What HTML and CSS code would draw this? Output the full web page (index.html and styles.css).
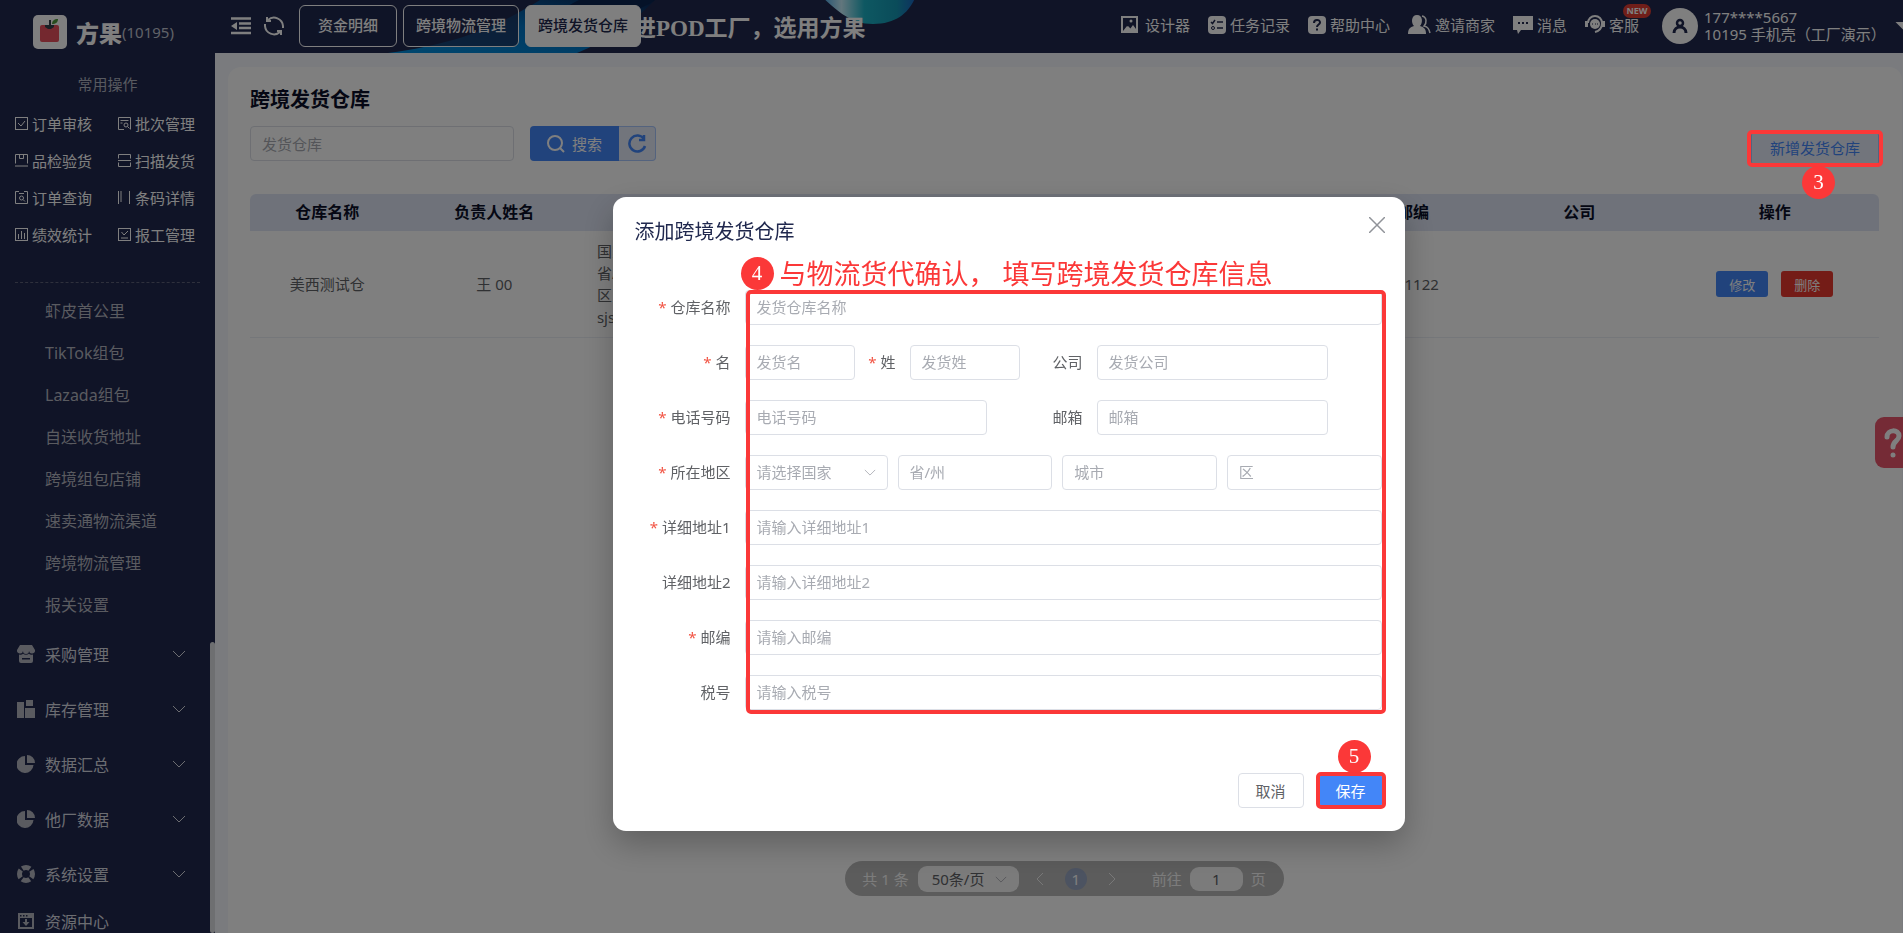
FILE: index.html
```html
<!DOCTYPE html>
<html lang="zh-CN">
<head>
    <meta charset="UTF-8">
    <meta name="viewport" content="width=device-width, initial-scale=1.0">
    <title>跨境发货仓库</title>
    <link rel="stylesheet" href="styles.css">
</head>
<body>
    <div class="app">
        <aside class="sidebar">
            <div class="brand">
                <svg class="brand-logo" viewBox="0 0 34 34">
                    <rect width="34" height="34" rx="5" fill="#fff"/>
                    <rect x="7" y="10" width="19" height="17" rx="2" fill="#e8505f"/>
                    <path d="M12 10h9v2l-3 2h-3l-3-2z" fill="#33404a"/>
                    <path d="M16 5h2v8h-2z" fill="#33404a"/>
                    <path d="M19 9c0-3 2-5 6-5 0 3-2 5-6 5z" fill="#4f9a3c"/>
                </svg>
                <span class="brand-name">方果</span>
                <span class="brand-id">(10195)</span>
            </div>
            <div class="quick-title">常用操作</div>
            <nav class="quick">
                <a href="#"><svg viewBox="0 0 13 13"><rect x=".5" y=".5" width="12" height="12"/><path d="M3 6l3 3 4-5"/></svg>订单审核</a>
                <a href="#"><svg viewBox="0 0 13 13"><path d="M6 12.500H.5V.5h12v12M2.500 3.500h8M2.500 6h2"/><circle cx="8" cy="8" r="2"/><path d="M9.500 9.500l2 2"/></svg>批次管理</a>
                <a href="#"><svg viewBox="0 0 13 13"><path d="M.5 9.500V.5h12v9M4.500.5v4h4v-4M0 12h13"/></svg>品检验货</a>
                <a href="#"><svg viewBox="0 0 13 13"><path d="M.5 4.500v-4h12v4M.5 8.500v4h12v-4M0 6.500h13"/></svg>扫描发货</a>
                <a href="#"><svg viewBox="0 0 13 13"><path d="M4 .5H.5v12h12V.5H9M4 2.500h5"/><circle cx="6.500" cy="7" r="2"/><path d="M8 8.500l2 2"/></svg>订单查询</a>
                <a href="#"><svg viewBox="0 0 13 13"><path d="M.5 0v13M3 0v11M11.500 0v13"/></svg>条码详情</a>
                <a href="#"><svg viewBox="0 0 13 13"><rect x=".5" y=".5" width="12" height="12"/><path d="M3.500 6v5M6.500 3v8M9.500 5v6"/></svg>绩效统计</a>
                <a href="#"><svg viewBox="0 0 13 13"><rect x=".5" y=".5" width="12" height="12"/><path d="M3.500 4l2.500 3 4-4M3 10h7"/></svg>报工管理</a>
            </nav>
            <nav class="submenu">
                <a href="#">虾皮首公里</a>
                <a href="#">TikTok组包</a>
                <a href="#">Lazada组包</a>
                <a href="#">自送收货地址</a>
                <a href="#">跨境组包店铺</a>
                <a href="#">速卖通物流渠道</a>
                <a href="#">跨境物流管理</a>
                <a href="#">报关设置</a>
            </nav>
            <nav class="menu">
                <a href="#">
                    <svg class="menu-icon" viewBox="0 0 18 18"><path d="M3 0h12l3 5a3 3 0 0 1-6 1 3 3 0 0 1-6 0 3 3 0 0 1-6-1z"/><path fill-rule="evenodd" d="M2 9.500c2 .6 3 .3 4-.7 1.700 1.300 4.300 1.300 6 0 1 1 2 1.300 4 .7V16a2 2 0 0 1-2 2H4a2 2 0 0 1-2-2zM5 13v1.500h8V13z"/></svg>
                    采购管理
                    <svg class="arrow" viewBox="0 0 14 8"><path d="M1 1l6 6 6-6"/></svg>
                </a>
                <a href="#">
                    <svg class="menu-icon" viewBox="0 0 18 18"><path d="M0 2h7v16H0zM9 0h7v6H9zM8 8h10v10H8z"/></svg>
                    库存管理
                    <svg class="arrow" viewBox="0 0 14 8"><path d="M1 1l6 6 6-6"/></svg>
                </a>
                <a href="#">
                    <svg class="menu-icon" viewBox="0 0 18 18"><path d="M8 1a8.500 8.500 0 1 0 8.500 9H8zM10 0v8h8a8 8 0 0 0-8-8z"/></svg>
                    数据汇总
                    <svg class="arrow" viewBox="0 0 14 8"><path d="M1 1l6 6 6-6"/></svg>
                </a>
                <a href="#">
                    <svg class="menu-icon" viewBox="0 0 18 18"><path d="M8 1a8.500 8.500 0 1 0 8.500 9H8zM10 0v8h8a8 8 0 0 0-8-8z"/></svg>
                    他厂数据
                    <svg class="arrow" viewBox="0 0 14 8"><path d="M1 1l6 6 6-6"/></svg>
                </a>
                <a href="#">
                    <svg class="menu-icon ring" viewBox="0 0 18 18"><circle cx="9" cy="9" r="6.500"/></svg>
                    系统设置
                    <svg class="arrow" viewBox="0 0 14 8"><path d="M1 1l6 6 6-6"/></svg>
                </a>
                <a href="#" class="last">
                    <svg class="menu-icon" viewBox="0 0 18 18"><path fill-rule="evenodd" d="M1 1h16v16H1zM3 6v9h12V6zM3 3v1.500h1.500V3zM6 3v1.500h1.500V3zM9 3v1.500h1.500V3z"/><path d="M8 7h2v3h2.500L9 14l-3.500-4H8z"/></svg>
                    资源中心
                </a>
            </nav>
            <div class="sidebar-thumb"></div>
        </aside>

        <div class="page">
            <header class="topbar">
                <svg class="banner" viewBox="0 0 700 53">
                    <defs>
                        <linearGradient id="wave" x1="0" y1="1" x2="1" y2="0">
                            <stop offset="0" stop-color="#0090e0"/>
                            <stop offset=".5" stop-color="#0074c4"/>
                            <stop offset="1" stop-color="#0c2350"/>
                        </linearGradient>
                        <linearGradient id="ball" x1="0" y1="0" x2="1" y2="0">
                            <stop offset="0" stop-color="#4aa8e8"/>
                            <stop offset=".2" stop-color="#c5edfa"/>
                            <stop offset=".45" stop-color="#1cb0c4"/>
                            <stop offset=".8" stop-color="#1598b4"/>
                            <stop offset="1" stop-color="#1a64c0"/>
                        </linearGradient>
                    </defs>
                    <path d="M173 53C240 44 280 28 325 0H440C420 20 395 40 362 53z" fill="url(#wave)"/>
                    <path d="M330 18C350 8 356 4 364 0H440C420 14 390 22 330 18z" fill="#0a2450"/>
                    <path d="M608-2C620 8 634 24 658 24 682 24 694 12 700-2z" fill="url(#ball)"/>
                </svg>
                <button class="icon-btn" type="button" aria-label="收起菜单">
                    <svg width="20" height="18" viewBox="0 0 20 18"><path d="M0 1.500h20M8 6.500h12M8 11h12M0 16h20" stroke="#fff" stroke-width="2.500"/><path d="M0 9l6-4v8z" fill="#fff"/></svg>
                </button>
                <button class="icon-btn" type="button" aria-label="刷新">
                    <svg width="22" height="22" viewBox="0 0 22 22" fill="none" stroke="#fff" stroke-width="2"><path d="M5 5a9 9 0 0 1 15 6v2M17 17a9 9 0 0 1-15-6V9"/><path d="M4 2v4h4M18 20v-4h-4"/></svg>
                </button>
                <div class="tabs">
                    <button class="tab" type="button">资金明细</button>
                    <button class="tab" type="button">跨境物流管理</button>
                    <button class="tab active" type="button">跨境发货仓库</button>
                </div>
                <div class="slogan">进POD工厂，选用方果</div>
                <nav class="tools">
                    <a href="#" class="wide"><svg width="17" height="17" viewBox="0 0 17 17"><path fill-rule="evenodd" d="M0 0h17v17H0zM2 2v13l4-5 3 3 3-4 3 4V2z" fill="#fff"/><path d="M3 15l4-5 3 3 2-2 3 4z" fill="#fff"/><circle cx="10" cy="5" r="1.500" fill="#fff"/></svg>设计器</a>
                    <a href="#"><svg width="18" height="18" viewBox="0 0 18 18"><rect width="18" height="18" rx="4" fill="#fff"/><path d="M3 6l1.500 1.500L7 4M9 6h6M9 12h6" stroke="#20284e" stroke-width="1.500" fill="none"/><circle cx="5" cy="12" r="1.500" stroke="#20284e" fill="none"/></svg>任务记录</a>
                    <a href="#"><svg width="18" height="18" viewBox="0 0 18 18"><rect width="18" height="18" rx="4" fill="#fff"/><path d="M6 7c0-4 6-4 6-.5 0 2-3 2-3 4.500" stroke="#20284e" stroke-width="2" fill="none"/><path d="M8 12.500h2v2H8z" fill="#20284e"/></svg>帮助中心</a>
                    <a href="#"><svg width="23" height="19" viewBox="0 0 23 19"><path d="M9 0c6 0 6 8 3 11 4 1 6 3 6 8H0c0-5 2-7 6-8C3 8 3 0 9 0z" fill="#fff"/><path d="M14 1c5 1 5 7 2 10 4 1 5 3 6 7" stroke="#fff" stroke-width="1.500" fill="none"/></svg>邀请商家</a>
                    <a href="#"><svg width="20" height="18" viewBox="0 0 20 18"><path d="M0 0h20v14H8l-3 4-1-4H0z" fill="#fff"/><path d="M5 6h2v2H5zM9 6h2v2H9zM13 6h2v2h-2z" fill="#20284e"/></svg>消息</a>
                    <a href="#"><svg width="20" height="19" viewBox="0 0 20 19"><path d="M3 8a7 7 0 0 1 14 0c0 6-3 8-7 9" stroke="#fff" stroke-width="2" fill="none"/><circle cx="10" cy="9" r="5" fill="#fff"/><path d="M0 6h3v6H0zM17 6h3v6h-3z" fill="#fff"/><path d="M7 9h1M10 9h1M12 9h1" stroke="#20284e"/></svg>客服<span class="new">NEW</span></a>
                </nav>
                <div class="user">
                    <svg width="36" height="36" viewBox="0 0 36 36"><circle cx="18" cy="18" r="18" fill="#fff"/><circle cx="18" cy="15" r="3" fill="none" stroke="#20284e" stroke-width="2.500"/><path d="M12 25c0-4 3-6 6-6s6 2 6 6" fill="none" stroke="#20284e" stroke-width="3"/></svg>
                    <div class="user-info">
                        <div>177****5667</div>
                        <div>10195 手机壳（工厂演示）</div>
                    </div>
                    <span class="caret"></span>
                </div>
            </header>

            <main class="panel">
                <h1>跨境发货仓库</h1>
                <div class="toolbar">
                    <input class="search-input" type="text" placeholder="发货仓库" aria-label="发货仓库">
                    <button class="search-btn" type="button">
                        <svg width="18" height="18" viewBox="0 0 18 18" fill="none" stroke="#fff" stroke-width="2"><circle cx="8" cy="8" r="7"/><path d="M13 13l4 4"/></svg>
                        搜索
                    </button>
                    <button class="reset-btn" type="button" aria-label="重置">
                        <svg width="20" height="20" viewBox="0 0 20 20" fill="none" stroke="#4386f8" stroke-width="2.500"><path d="M18 12a8 8 0 1 1-1-7"/><path d="M17 1v5h-5"/></svg>
                    </button>
                    <div class="add-wrap">
                        <button class="add-btn" type="button">新增发货仓库</button>
                        <span class="mark-frame"></span>
                        <span class="mark-num num-3">3</span>
                    </div>
                </div>
                <table>
                    <colgroup>
                        <col class="c-name"><col class="c-person"><col class="c-address"><col class="c-zip"><col class="c-company"><col class="c-action">
                    </colgroup>
                    <thead>
                        <tr>
                            <th>仓库名称</th>
                            <th>负责人姓名</th>
                            <th>地址</th>
                            <th>邮编</th>
                            <th>公司</th>
                            <th>操作</th>
                        </tr>
                    </thead>
                    <tbody>
                        <tr>
                            <td>美西测试仓</td>
                            <td>王 00</td>
                            <td class="address">国家<br>省/州<br>区<br>sjs</td>
                            <td>111122</td>
                            <td></td>
                            <td>
                                <div class="actions">
                                    <button class="edit-btn" type="button">修改</button>
                                    <button class="delete-btn" type="button">删除</button>
                                </div>
                            </td>
                        </tr>
                    </tbody>
                </table>
                <div class="pagination">
                    <span>共 1 条</span>
                    <span class="select-wrap page-size">
                        <select aria-label="每页条数"><option>50条/页</option></select>
                        <svg viewBox="0 0 14 8"><path d="M1 1l6 6 6-6"/></svg>
                    </span>
                    <button class="page-arrow" type="button" aria-label="上一页"><svg width="8" height="14" viewBox="0 0 8 14"><path d="M7 1L1 7l6 6"/></svg></button>
                    <button class="page-num" type="button">1</button>
                    <button class="page-arrow" type="button" aria-label="下一页"><svg width="8" height="14" viewBox="0 0 8 14"><path d="M1 1l6 6-6 6"/></svg></button>
                    <label class="jump">前往 <input type="text" value="1"> 页</label>
                </div>
            </main>
        </div>
    </div>

    <button class="help-tab" type="button" aria-label="帮助">
        <svg width="20" height="30" viewBox="0 0 20 30" fill="none" stroke="#fff" stroke-width="5" stroke-linecap="round"><path d="M4 9c0-8 12-8 12-1 0 5-6 5-6 11"/><path d="M10 27v0"/></svg>
    </button>

    <div class="overlay">
        <div class="dialog" role="dialog" aria-labelledby="dialogTitle">
            <div class="dialog-header">
                <h2 id="dialogTitle">添加跨境发货仓库</h2>
                <button class="close" type="button" aria-label="关闭">
                    <svg width="16" height="16" viewBox="0 0 16 16"><path d="M0 0l16 16M16 0L0 16" stroke="#909399" stroke-width="1.500"/></svg>
                </button>
            </div>
            <form class="form">
                <div class="row">
                    <label class="required" for="whName">仓库名称</label>
                    <input id="whName" type="text" placeholder="发货仓库名称">
                </div>
                <div class="row">
                    <label class="required" for="firstName">名</label>
                    <input id="firstName" class="w-name" type="text" placeholder="发货名">
                    <label class="required l-last" for="lastName">姓</label>
                    <input id="lastName" class="w-name" type="text" placeholder="发货姓">
                    <label class="l-company" for="company">公司</label>
                    <input id="company" class="w-side" type="text" placeholder="发货公司">
                </div>
                <div class="row">
                    <label class="required" for="phone">电话号码</label>
                    <input id="phone" class="w-phone" type="text" placeholder="电话号码">
                    <label for="email">邮箱</label>
                    <input id="email" class="w-side" type="text" placeholder="邮箱">
                </div>
                <div class="row">
                    <label class="required" for="country">所在地区</label>
                    <div class="region">
                        <span class="select-wrap">
                            <select id="country"><option>请选择国家</option></select>
                            <svg viewBox="0 0 14 8"><path d="M1 1l6 6 6-6"/></svg>
                        </span>
                        <input type="text" placeholder="省/州" aria-label="省/州">
                        <input type="text" placeholder="城市" aria-label="城市">
                        <input type="text" placeholder="区" aria-label="区">
                    </div>
                </div>
                <div class="row">
                    <label class="required" for="address1">详细地址1</label>
                    <input id="address1" type="text" placeholder="请输入详细地址1">
                </div>
                <div class="row">
                    <label for="address2">详细地址2</label>
                    <input id="address2" type="text" placeholder="请输入详细地址2">
                </div>
                <div class="row">
                    <label class="required" for="zip">邮编</label>
                    <input id="zip" type="text" placeholder="请输入邮编">
                </div>
                <div class="row">
                    <label for="taxNo">税号</label>
                    <input id="taxNo" type="text" placeholder="请输入税号">
                </div>
                <span class="mark-frame form-frame"></span>
                <div class="mark-note"><span class="mark-circle">4</span>与物流货代确认， 填写跨境发货仓库信息</div>
            </form>
            <div class="dialog-footer">
                <button class="cancel" type="button">取消</button>
                <div class="save-wrap">
                    <button class="save" type="button">保存</button>
                    <span class="mark-frame"></span>
                    <span class="mark-num num-5">5</span>
                </div>
            </div>
        </div>
    </div>
</body>
</html>
```
FILE: styles.css
```css
* {
    box-sizing: border-box;
}
body {
    margin: 0;
    font-family: "Noto Sans", "Noto Sans CJK SC", sans-serif;
    font-size: 15px;
    color: #606266;
    background-color: #f4f7fd;
    overflow: hidden;
}
a {
    color: inherit;
    text-decoration: none;
}
button, input, select {
    font-family: inherit;
    font-size: 15px;
}
button {
    padding: 0;
    cursor: pointer;
}
.app {
    display: flex;
    height: 100vh;
}

/* sidebar */
.sidebar {
    position: relative;
    flex: none;
    width: 215px;
    overflow: hidden;
    background-color: #20284e;
    color: #fff;
}
.brand {
    display: flex;
    align-items: center;
    height: 63px;
    padding-left: 33px;
}
.brand-logo {
    width: 34px;
    height: 34px;
    margin-right: 9px;
}
.brand-name {
    font-size: 23px;
    font-weight: 900;
}
.brand-id {
    font-size: 15px;
    color: #c0c4d0;
}
.quick-title {
    height: 42px;
    line-height: 42px;
    text-align: center;
    color: #b0b4c0;
}
.quick {
    display: grid;
    grid-template-columns: 103px 1fr;
    grid-auto-rows: 37px;
    margin: 0 15px;
    padding-bottom: 29px;
    border-bottom: 1px dashed #5c6078;
}
.quick a {
    display: flex;
    align-items: center;
    gap: 4px;
    white-space: nowrap;
}
.quick svg {
    flex: none;
    width: 13px;
    height: 13px;
    fill: none;
    stroke: #fff;
}
.submenu {
    padding-top: 7px;
}
.submenu a {
    display: block;
    height: 42px;
    padding-left: 45px;
    line-height: 42px;
    font-size: 16px;
    color: #b4b6c0;
}
.menu a {
    display: flex;
    align-items: center;
    height: 55px;
    padding: 0 29px 0 17px;
    font-size: 16px;
    color: #d8dae2;
}
.menu .last {
    height: 40px;
}
.menu-icon {
    width: 18px;
    height: 18px;
    margin-right: 10px;
    fill: #b4b6c0;
}
.ring {
    fill: none;
    stroke: #b4b6c0;
    stroke-width: 5;
    stroke-dasharray: 8 2;
    stroke-dashoffset: 4;
}
.arrow {
    width: 14px;
    height: 8px;
    margin-left: auto;
    fill: none;
    stroke: #d8dae2;
}
.sidebar-thumb {
    position: absolute;
    right: 0;
    top: 642px;
    bottom: 0;
    width: 5px;
    border-radius: 3px;
    background-color: #dddee2;
}

/* top bar */
.page {
    flex: 1;
    min-width: 0;
    display: flex;
    flex-direction: column;
}
.topbar {
    position: relative;
    display: flex;
    align-items: center;
    flex: none;
    height: 53px;
    padding: 0 0 2px 16px;
    overflow: hidden;
    background-color: #20284e;
    color: #fff;
    white-space: nowrap;
}
.banner {
    position: absolute;
    left: 0;
    top: 0;
    width: 700px;
    height: 53px;
}
.icon-btn {
    position: relative;
    display: flex;
    margin-right: 12px;
    border: none;
    background: none;
}
.tabs {
    position: relative;
    z-index: 1;
    display: flex;
    gap: 6px;
    margin-left: 2px;
}
.tab {
    height: 42px;
    padding: 0 12px 2px;
    border: 1px solid #fff;
    border-radius: 6px;
    background-color: rgba(32, 40, 78, 0.7);
    color: #fff;
    font-weight: 500;
}
.tab:first-child {
    padding: 0 18px 2px;
}
.tab.active {
    background-color: #fff;
    color: #20284e;
}
.slogan {
    position: relative;
    margin-left: -8px;
    font-family: "Liberation Serif", "Noto Sans CJK SC", serif;
    font-size: 23px;
    font-weight: bold;
}
.tools {
    display: flex;
    gap: 18px;
    margin: 0 0 2px auto;
    line-height: 18px;
}
.tools a {
    position: relative;
    display: flex;
    align-items: center;
    gap: 4px;
}
.tools .wide {
    gap: 7px;
}
.new {
    position: absolute;
    right: -12px;
    top: -11px;
    width: 28px;
    height: 14px;
    border-radius: 7px;
    background-color: #e03c32;
    font-size: 9px;
    line-height: 14px;
    font-weight: bold;
    text-align: center;
}
.user {
    display: flex;
    align-items: center;
    margin-left: 23px;
}
.user-info {
    width: 197px;
    padding-left: 6px;
    line-height: 17px;
}
.caret {
    width: 8px;
    height: 8px;
    background-color: #fff;
    clip-path: polygon(0 0, 100% 0, 100% 100%);
}

/* content */
.panel {
    flex: 1;
    display: flex;
    flex-direction: column;
    margin: 14px 1px 0 13px;
    padding: 18px 23px 37px 22px;
    border-radius: 13px 13px 0 0;
    background-color: #fff;
}
h1 {
    margin: 0 0 11px;
    font-size: 20px;
    line-height: 30px;
    color: #0a0f28;
}
.toolbar {
    display: flex;
    height: 68px;
    align-items: flex-start;
}
input, select {
    height: 35px;
    padding: 0 11px;
    border: 1px solid #dcdfe6;
    border-radius: 4px;
    background-color: #fff;
    color: #606266;
    outline: none;
}
input::placeholder {
    color: #a8abb2;
    opacity: 1;
}
.search-input {
    width: 264px;
    margin-right: 16px;
}
.search-btn {
    display: flex;
    align-items: center;
    justify-content: center;
    gap: 7px;
    width: 89px;
    height: 35px;
    border: none;
    border-radius: 4px 0 0 4px;
    background-color: #4386f8;
    color: #fff;
}
.reset-btn {
    display: flex;
    align-items: center;
    justify-content: center;
    width: 37px;
    height: 35px;
    border: 1px solid #a8c6fc;
    border-left: none;
    border-radius: 0 4px 4px 0;
    background-color: #e4ebf9;
}
.add-wrap {
    position: relative;
    margin: 5px 0 0 auto;
}
.add-btn {
    height: 35px;
    padding: 0 18px 2px;
    border: 1px solid #a8c6fc;
    border-radius: 4px;
    background-color: #e4ebf9;
    color: #4386f8;
}
table {
    width: 100%;
    table-layout: fixed;
    border-spacing: 0;
}
.c-name { width: 9.5%; }
.c-person { width: 11%; }
.c-address { width: 46.3%; }
.c-zip { width: 9.2%; }
.c-company { width: 11.2%; }
.c-action { width: 12.8%; }
th {
    height: 37px;
    padding: 0 0 2px;
    background-color: #dfe5f5;
    color: #0a0f28;
    font-size: 16px;
    line-height: 20px;
}
th:first-child {
    border-top-left-radius: 6px;
}
th:last-child {
    border-top-right-radius: 6px;
}
td {
    padding: 9px 0;
    border-bottom: 1px solid #ebeef5;
    line-height: 22px;
    text-align: center;
}
.address {
    padding-left: 13px;
    text-align: left;
}
.actions {
    display: flex;
    justify-content: center;
    gap: 13px;
}
.edit-btn, .delete-btn {
    width: 52px;
    height: 26px;
    border: none;
    border-radius: 3px;
    background-color: #4386f8;
    color: #fff;
    font-size: 13px;
}
.delete-btn {
    background-color: #e8392e;
}
.pagination {
    display: flex;
    align-items: center;
    align-self: center;
    height: 35px;
    margin-top: auto;
    padding: 0 18px 0 17px;
    border-radius: 18px;
    background-color: #b8b8b8;
    color: #f8f8f8;
}
.select-wrap {
    position: relative;
    display: flex;
}
.select-wrap select {
    width: 100%;
    appearance: none;
    color: #a8abb2;
}
.select-wrap svg {
    position: absolute;
    right: 12px;
    top: 50%;
    width: 12px;
    height: 7px;
    margin-top: -3px;
    fill: none;
    stroke: #a8abb2;
    pointer-events: none;
}
.page-size {
    width: 101px;
    margin-left: 9px;
}
.page-size select {
    height: 26px;
    padding: 0 14px;
    border: none;
    border-radius: 9px;
    color: #606266;
    background-color: #f6f6f6;
}
.page-arrow {
    display: flex;
    margin: 0 17px;
    border: none;
    background: none;
}
.page-arrow svg {
    fill: none;
    stroke: #f0f0f0;
}
.page-num {
    width: 22px;
    height: 22px;
    margin: 0 4px;
    border: none;
    border-radius: 50%;
    background-color: #98a6c2;
    color: #fff;
}
.jump {
    display: flex;
    align-items: center;
    gap: 8px;
    margin-left: 19px;
}
.jump input {
    width: 53px;
    height: 24px;
    border: none;
    border-radius: 9px;
    background-color: #f6f6f6;
    text-align: center;
}
.help-tab {
    position: absolute;
    right: 0;
    top: 417px;
    display: flex;
    align-items: center;
    width: 28px;
    height: 51px;
    padding-left: 8px;
    border: none;
    border-radius: 9px 0 0 9px;
    background-color: #ea566c;
    overflow: hidden;
}
.help-tab svg {
    flex: none;
}

/* dialog */
.overlay {
    position: fixed;
    inset: 0;
    z-index: 10;
    display: flex;
    align-items: center;
    justify-content: center;
    padding: 94px 0 0 114px;
    background-color: rgba(0, 0, 0, 0.5);
}
.dialog {
    width: 792px;
    padding: 20px 23px 23px 22px;
    border-radius: 13px;
    background-color: #fff;
    box-shadow: 0 13px 32px rgba(0, 0, 0, 0.25);
}
.dialog-header {
    display: flex;
    justify-content: space-between;
    align-items: flex-start;
    height: 73px;
}
h2 {
    margin: 0;
    font-size: 20px;
    line-height: 30px;
    font-weight: normal;
    color: #20284e;
}
.close {
    display: flex;
    margin-right: -3px;
    border: none;
    background: none;
}
.form {
    position: relative;
    display: flex;
    flex-direction: column;
    gap: 20px;
}
.row {
    display: flex;
}
.row label {
    flex: none;
    width: 110px;
    padding-right: 14px;
    line-height: 35px;
    text-align: right;
}
.required::before {
    content: "*";
    margin-right: 4px;
    color: #f25545;
}
.row > input {
    flex: 1;
    min-width: 0;
}
.row > .w-name {
    flex: none;
    width: 110px;
}
.row > .w-phone {
    flex: none;
    width: 242px;
}
.row > .w-side {
    flex: none;
    width: 231px;
}
.row .l-last {
    width: 55px;
}
.row .l-company {
    width: 77px;
}
.region {
    flex: 1;
    display: grid;
    grid-template-columns: 143px 1fr 1fr 1fr;
    gap: 10px;
}
.region input {
    min-width: 0;
}
.dialog-footer {
    display: flex;
    justify-content: flex-end;
    gap: 16px;
    margin-top: 63px;
}
.cancel, .save {
    width: 66px;
    height: 35px;
    border: 1px solid #dcdfe6;
    border-radius: 4px;
    background-color: #fff;
    color: #606266;
}
.save {
    width: 62px;
    border-color: #4386f8;
    background-color: #4386f8;
    color: #fff;
}
.save-wrap {
    position: relative;
}

/* step marks */
.mark-frame {
    position: absolute;
    inset: -1px -4px;
    z-index: 20;
    border: 4px solid #fb3838;
    border-radius: 5px;
    pointer-events: none;
}
.form-frame {
    inset: 0 -4px -4px 111px;
}
.mark-num, .mark-circle {
    width: 33px;
    height: 33px;
    border-radius: 50%;
    background-color: #fb3838;
    color: #fff;
    font-family: "Liberation Serif", serif;
    font-size: 21px;
    line-height: 33px;
    text-align: center;
}
.mark-num {
    position: absolute;
    left: 50%;
    z-index: 21;
    margin-left: -13px;
}
.num-3 {
    top: 100%;
}
.num-5 {
    bottom: 100%;
}
.mark-note {
    position: absolute;
    left: 106px;
    bottom: 100%;
    display: flex;
    align-items: center;
    gap: 6px;
    color: #fb3838;
    font-size: 27px;
    line-height: 33px;
    white-space: nowrap;
}
```
